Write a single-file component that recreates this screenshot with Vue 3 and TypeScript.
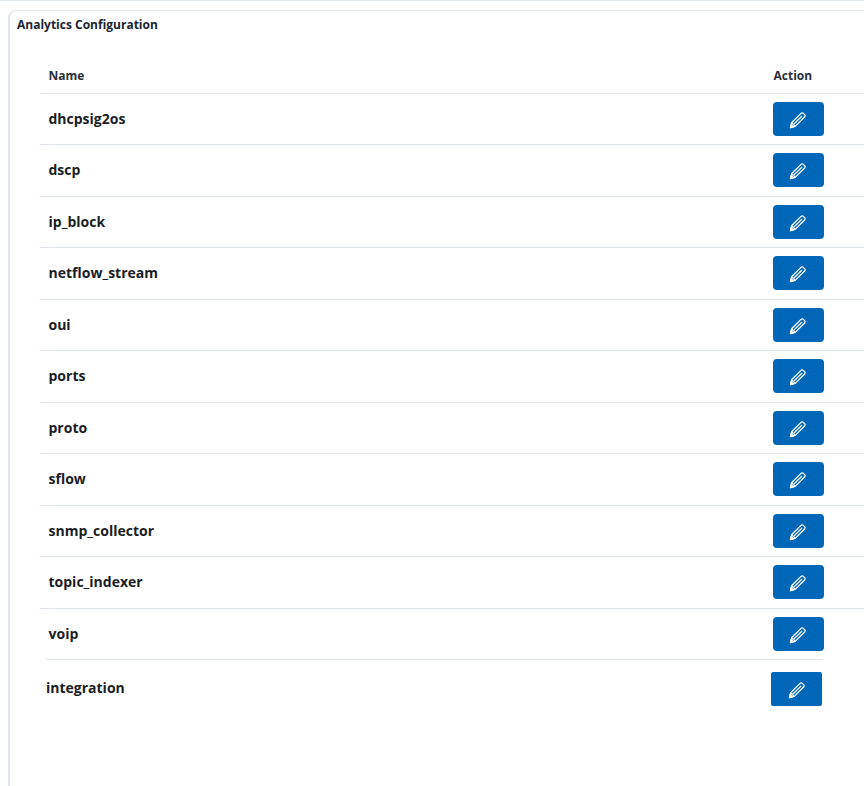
<script setup lang="ts">
const rows: string[] = [
  'dhcpsig2os', 'dscp', 'ip_block', 'netflow_stream', 'oui', 'ports',
  'proto', 'sflow', 'snmp_collector', 'topic_indexer', 'voip',
]
</script>

<template>
  <div class="page">
    <section class="card">
      <h2 class="title">Analytics Configuration</h2>
      <div class="table">
        <div class="row head">
          <span class="name">Name</span>
          <span class="action">Action</span>
        </div>
        <div v-for="(r, i) in rows" :key="r" class="row" :class="{ last: i === rows.length - 1 }">
          <span class="name">{{ r }}</span>
          <span class="action">
            <button class="edit" type="button" :aria-label="'Edit ' + r">
              <svg width="18" height="18" viewBox="0 0 16 16" fill="none" stroke="#fff" stroke-width="1.1" stroke-linejoin="round">
                <path d="M1.3 14.7l1-4.2 8.4-8.4a1.4 1.4 0 0 1 2 0l1.2 1.2a1.4 1.4 0 0 1 0 2l-8.4 8.4z" />
                <path d="M2.3 10.5l3.2 3.2M4.4 11.6l7.2-7.2" />
                <path d="M1.3 14.7l.6-2.6 2 2z" fill="#fff" />
              </svg>
            </button>
          </span>
        </div>
        <div class="extra">
          <span class="name">integration</span>
          <button class="edit square" type="button" aria-label="Edit integration">
            <svg width="18" height="18" viewBox="0 0 16 16" fill="none" stroke="#fff" stroke-width="1.1" stroke-linejoin="round">
              <path d="M1.3 14.7l1-4.2 8.4-8.4a1.4 1.4 0 0 1 2 0l1.2 1.2a1.4 1.4 0 0 1 0 2l-8.4 8.4z" />
              <path d="M2.3 10.5l3.2 3.2M4.4 11.6l7.2-7.2" />
              <path d="M1.3 14.7l.6-2.6 2 2z" fill="#fff" />
            </svg>
          </button>
        </div>
      </div>
    </section>
  </div>
</template>

<style scoped>
.page {
  width: 864px;
  height: 786px;
  box-sizing: border-box;
  overflow: hidden;
  padding: 9px 0 0 8px;
  background: #fff;
  border-top: 1px solid #e3e7f0;
  font-family: "Open Sans", "Noto Sans", sans-serif;
  color: #1a1d24;
}
.card {
  height: 800px;
  box-sizing: border-box;
  border: solid #e1e6ec;
  border-width: 1px 0 0 2px;
  border-top-left-radius: 8px;
  padding: 5px 0 0 7px;
}
.title {
  margin: 0;
  font-size: 12px;
  line-height: 17px;
  font-weight: 700;
  color: #1c2530;
}
.table {
  margin: 26.75px 0 0 23px;
}
.row {
  display: flex;
  align-items: center;
  justify-content: space-between;
  box-sizing: border-box;
  height: 51.5px;
  padding-left: 8.5px;
  border-bottom: 1px solid #dde2ee;
}
.row.head {
  height: 34px;
  padding-bottom: 2px;
}
.row.last {
  height: 50.5px;
  border-bottom: 0;
}
.head .name,
.head .action {
  padding: 0;
  font-size: 12px;
  font-weight: 700;
  color: #2a2f3a;
}
.name {
  padding-bottom: 2px;
  font-size: 14px;
  font-weight: 700;
  color: #1a1d24;
}
.action {
  width: 90.5px;
  display: block;
}
.action .edit {
  margin: 0 0 0.5px -1px;
}
.edit {
  display: flex;
  align-items: center;
  justify-content: center;
  width: 51px;
  height: 34px;
  padding: 2px 0 0;
  border: 0;
  border-radius: 4px;
  background: #0067b8;
}
.edit svg {
  display: block;
}
.extra {
  display: flex;
  align-items: center;
  justify-content: space-between;
  width: 776px;
  margin-left: 6px;
  padding-top: 12px;
  border-top: 1px solid #dde2ee;
}
.extra .name {
  padding-bottom: 4px;
}
.extra .square {
  border-radius: 2px;
}
</style>
